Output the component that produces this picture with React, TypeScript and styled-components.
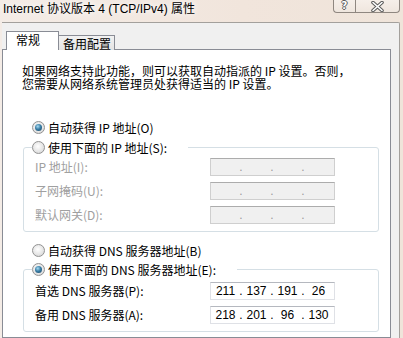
import React from "react";
import styled, { createGlobalStyle } from "styled-components";

const GlobalStyle = createGlobalStyle`
  html, body {
    margin: 0;
    padding: 0;
  }
  body {
    background: #f2e9e1;
    font-family: "Noto Sans CJK SC", sans-serif;
  }
`;

const Window = styled.div`
  width: 403px;
  height: 338px;
  overflow: hidden;
  display: flex;
  flex-direction: column;
  background: linear-gradient(90deg, #f4ece6 0%, #f1e5dc 60%, #efe4da 100%);
`;

const TitleBar = styled.div`
  height: 22px;
  flex: none;
  display: flex;
  justify-content: space-between;
  align-items: flex-start;
`;

const TitleText = styled.div`
  padding: 1px 0 0 3px;
  font-family: "Liberation Sans", "Noto Sans CJK SC", sans-serif;
  font-size: 12px;
  line-height: 16px;
  color: #000;
  white-space: nowrap;
  text-shadow: 0 0 6px #fff, 0 0 10px #fff;
`;

const CaptionButtons = styled.div`
  display: flex;
  margin-right: 3px;
`;

const CaptionButton = styled.div<{ $w: number; $side: "left" | "right" }>`
  width: ${(p) => p.$w}px;
  height: 13px;
  box-sizing: border-box;
  display: flex;
  align-items: center;
  justify-content: center;
  background: linear-gradient(#f6efe9, #efe6de);
  border: 1px solid #8f8780;
  border-top: none;
  ${(p) =>
    p.$side === "left"
      ? "border-bottom-left-radius: 4px; border-right: none;"
      : "border-bottom-right-radius: 4px;"}
`;

const HelpGlyph = styled.span`
  font-family: "DejaVu Sans", sans-serif;
  font-weight: bold;
  font-size: 10px;
  line-height: 12px;
  color: #fff;
  text-shadow: 1px 0 #5a5a5a, -1px 0 #5a5a5a, 0 1px #5a5a5a, 0 -1px #5a5a5a;
`;

const Frame = styled.div`
  flex: 1;
  margin: 0 3px 0 2px;
  padding: 8px 8px 0 0;
  border: 1px solid #a3a09c;
  border-left: none;
  border-bottom: none;
  border-radius: 0 2px 0 0;
  background: #f0f0f0;
  display: flex;
  flex-direction: column;
`;

const Tabs = styled.div`
  display: flex;
  align-items: flex-end;
  padding-left: 4px;
  margin-bottom: -1px;
  position: relative;
  z-index: 1;
`;

const Tab = styled.div<{ $active?: boolean }>`
  box-sizing: border-box;
  height: ${(p) => (p.$active ? 19 : 15)}px;
  width: ${(p) => (p.$active ? 53 : 56)}px;
  padding: 1px 0 0 ${(p) => (p.$active ? 9 : 4)}px;
  border: 1px solid #898c95;
  border-bottom: none;
  ${(p) => (p.$active ? "" : "border-left: none;")}
  background: ${(p) =>
    p.$active ? "#fff" : "linear-gradient(#f2f2f2, #e3e3e3)"};
  font-size: 12px;
  line-height: 13px;
  color: #000;
`;

const Panel = styled.div`
  flex: 1;
  background: #fff;
  border: 1px solid #898c95;
  padding: 14px 11px 0 19px;
`;

const Intro = styled.p`
  margin: 0 0 27px;
  font-size: 12px;
  line-height: 13px;
  color: #000;
  white-space: nowrap;
`;

const RadioRow = styled.div<{ $h: number; $indent?: boolean; $top?: number }>`
  height: ${(p) => p.$h}px;
  margin-top: ${(p) => p.$top ?? 0}px;
  display: flex;
  align-items: center;
  gap: 3px;
  padding-left: ${(p) => (p.$indent ? 10 : 0)}px;
  font-size: 12px;
  color: #000;
  white-space: nowrap;
`;

const RadioDot = styled.span<{ $checked?: boolean }>`
  width: 13px;
  height: 13px;
  box-sizing: border-box;
  border-radius: 50%;
  flex: none;
  border: 1px solid #929292;
  background: radial-gradient(circle at 45% 40%, #ffffff 0%, #e6e6e6 55%, #cfcfcf 100%);
  display: flex;
  align-items: center;
  justify-content: center;
  &::after {
    content: "";
    display: ${(p) => (p.$checked ? "block" : "none")};
    width: 7px;
    height: 7px;
    border-radius: 50%;
    background: radial-gradient(circle at 40% 35%, #a7dcf3 0%, #3a7ea6 45%, #18415e 100%);
  }
`;

const Group = styled.fieldset`
  margin: 0 0 0 1px;
  min-width: 0;
  border: 1px solid #d5dfe5;
  border-radius: 3px;
  padding: 0 0 7px 8px;
`;

const GroupLegend = styled.legend`
  padding: 0 21px 0 0;
  background: #fff;
`;

const FieldGrid = styled.div<{ $top: number }>`
  margin: ${(p) => p.$top}px 0 0 3px;
  display: grid;
  grid-template-columns: 175px 125px;
  row-gap: 6px;
  align-items: center;
`;

const FieldLabel = styled.div<{ $disabled?: boolean }>`
  font-size: 12px;
  line-height: 14px;
  color: ${(p) => (p.$disabled ? "#a0a0a0" : "#000")};
  white-space: nowrap;
`;

const IpBox = styled.div<{ $disabled?: boolean }>`
  height: 18px;
  box-sizing: border-box;
  display: flex;
  align-items: center;
  padding-left: 2px;
  border: 1px solid ${(p) => (p.$disabled ? "#cfcfcf" : "#dfe1e6")};
  border-top-color: ${(p) => (p.$disabled ? "#acacac" : "#b5b8bf")};
  background: ${(p) => (p.$disabled ? "#f0f0f0" : "#fff")};
  font-family: "Liberation Sans", sans-serif;
  font-size: 12px;
  line-height: 14px;
  color: ${(p) => (p.$disabled ? "#9c9c9c" : "#000")};
`;

const Octet = styled.span`
  width: 25px;
  text-align: center;
`;

const Dot = styled.span`
  width: 6px;
  text-align: center;
`;

function IpField({ value, disabled }: { value?: string[]; disabled?: boolean }) {
  const parts = value ?? ["", "", "", ""];
  return (
    <IpBox $disabled={disabled}>
      {parts.map((p, i) => (
        <React.Fragment key={i}>
          {i > 0 && <Dot>.</Dot>}
          <Octet>{p}</Octet>
        </React.Fragment>
      ))}
    </IpBox>
  );
}

function CloseGlyph() {
  return (
    <svg width="13" height="11" viewBox="0 0 13 11">
      <path d="M2 1.5 L11 9.5 M11 1.5 L2 9.5" stroke="#5a5a5a" strokeWidth="3.6" strokeLinecap="round" />
      <path d="M2 1.5 L11 9.5 M11 1.5 L2 9.5" stroke="#ffffff" strokeWidth="1.6" strokeLinecap="round" />
    </svg>
  );
}

export default function App() {
  return (
    <>
      <GlobalStyle />
      <Window>
        <TitleBar>
          <TitleText>Internet 协议版本 4 (TCP/IPv4) 属性</TitleText>
          <CaptionButtons>
            <CaptionButton $w={22} $side="left">
              <HelpGlyph>?</HelpGlyph>
            </CaptionButton>
            <CaptionButton $w={45} $side="right">
              <CloseGlyph />
            </CaptionButton>
          </CaptionButtons>
        </TitleBar>
        <Frame>
          <Tabs>
            <Tab $active>常规</Tab>
            <Tab>备用配置</Tab>
          </Tabs>
          <Panel>
            <Intro>
              如果网络支持此功能，则可以获取自动指派的 IP 设置。否则，
              <br />
              您需要从网络系统管理员处获得适当的 IP 设置。
            </Intro>

            <RadioRow $h={20} $indent>
              <RadioDot $checked />
              自动获得 IP 地址(O)
            </RadioRow>
            <Group>
              <GroupLegend>
                <RadioRow $h={20}>
                  <RadioDot />
                  使用下面的 IP 地址(S):
                </RadioRow>
              </GroupLegend>
              <FieldGrid $top={1}>
                <FieldLabel $disabled>IP 地址(I):</FieldLabel>
                <IpField disabled />
                <FieldLabel $disabled>子网掩码(U):</FieldLabel>
                <IpField disabled />
                <FieldLabel $disabled>默认网关(D):</FieldLabel>
                <IpField disabled />
              </FieldGrid>
            </Group>

            <RadioRow $h={19} $indent $top={9}>
              <RadioDot />
              自动获得 DNS 服务器地址(B)
            </RadioRow>
            <Group>
              <GroupLegend>
                <RadioRow $h={19}>
                  <RadioDot $checked />
                  使用下面的 DNS 服务器地址(E):
                </RadioRow>
              </GroupLegend>
              <FieldGrid $top={3}>
                <FieldLabel>首选 DNS 服务器(P):</FieldLabel>
                <IpField value={["211", "137", "191", "26"]} />
                <FieldLabel>备用 DNS 服务器(A):</FieldLabel>
                <IpField value={["218", "201", "96", "130"]} />
              </FieldGrid>
            </Group>
          </Panel>
        </Frame>
      </Window>
    </>
  );
}
